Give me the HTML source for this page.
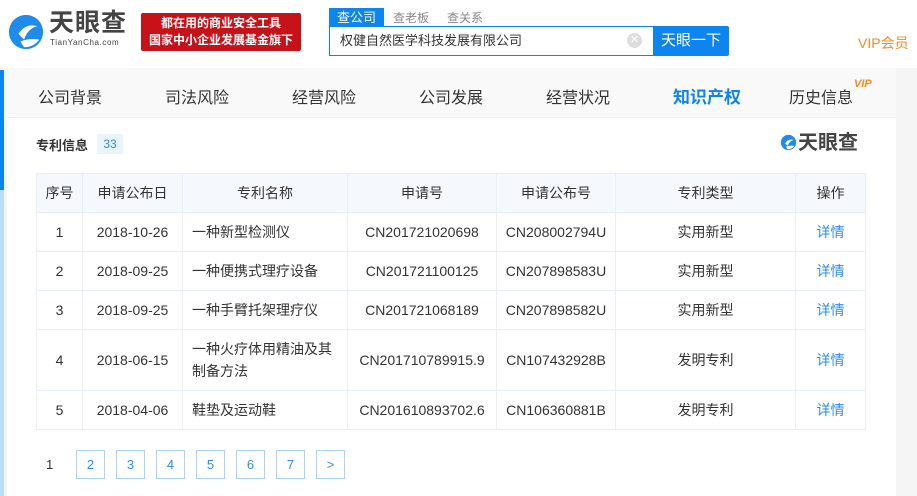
<!DOCTYPE html>
<html><head><meta charset="utf-8"><style>
*{margin:0;padding:0;box-sizing:border-box}
body{width:917px;height:496px;overflow:hidden;background:#fff;font-family:"Liberation Sans","Noto Sans CJK SC",sans-serif;color:#333;position:relative}
.a{position:absolute}
table{border-collapse:collapse;position:absolute;left:36px;top:173px;font-size:14px}
td,th{border:1px solid #e8eff8;text-align:center;font-weight:normal;padding:0}
th{background:#f5f9fd;height:39px}
td{height:39px}
td.l{text-align:left;padding-left:9px}
a{color:#2c8cf0;text-decoration:none}
.pg{position:absolute;top:450px;width:29px;height:29px;border:1px solid #a9d3fb;color:#2c8cf0;font-size:13px;text-align:center;line-height:27px}
</style></head><body>
<svg class="a" style="left:7px;top:13px" width="38" height="38" viewBox="0 0 40 40"><circle cx="20" cy="20" r="18" fill="#1f8bea"/><path d="M12 22 Q20 10 32 14 Q22 16 18 28Z" fill="#fff"/><path d="M14 30 Q24 26 34 28 Q28 36 18 36Z" fill="#fff"/></svg>
<div class="a" style="left:49px;top:8px;font-size:25px;font-weight:bold;color:#444;letter-spacing:1px;line-height:30px">天眼查</div>
<div class="a" style="left:50px;top:38px;font-size:8px;color:#444;letter-spacing:.6px">TianYanCha.com</div>
<div class="a" style="left:141px;top:13px;width:160px;height:38px;background:#c8121a;border-radius:2px;color:#fff;font-size:12px;font-weight:bold;text-align:center;line-height:17px;padding-top:2px">都在用的商业安全工具<br>国家中小企业发展基金旗下</div>
<div class="a" style="left:329px;top:8px;width:55px;height:19px;background:#0e84ef;color:#fff;font-size:13px;text-align:center;line-height:19px">查公司</div>
<div class="a" style="left:393px;top:9px;font-size:12px;color:#888">查老板</div>
<div class="a" style="left:447px;top:9px;font-size:12px;color:#888">查关系</div>
<div class="a" style="left:329px;top:26px;width:325px;height:30px;border:1px solid #0e84ef;font-size:13px;line-height:28px;padding-left:10px;color:#333">权健自然医学科技发展有限公司</div>
<div class="a" style="left:627px;top:33px;width:15px;height:15px;border-radius:50%;background:#ddd;color:#fff;font-size:11px;text-align:center;line-height:15px">✕</div>
<div class="a" style="left:653px;top:26px;width:76px;height:30px;background:#0e84ef;color:#fff;font-size:15px;text-align:center;line-height:30px;border-radius:0 2px 2px 0">天眼一下</div>
<div class="a" style="left:858px;top:33px;font-size:14px;color:#fb8a1c">VIP会员</div>
<div class="a" style="left:0;top:68px;width:917px;height:428px;background:#f5f5f5"></div>
<div class="a" style="left:0;top:70px;width:4px;height:120px;background:#0e84ef"></div>
<div class="a" style="left:0;top:190px;width:4px;height:306px;background:#bcdcfb"></div>
<div class="a" style="left:7px;top:68px;width:889px;height:428px;background:#fff"></div>
<div class="a" style="left:7px;top:68px;width:889px;height:50px;background:#f9f9f9;border-bottom:1px solid #eee"></div>
<div class="a" style="top:84px;font-size:16px;color:#333;left:38px">公司背景</div>
<div class="a" style="top:84px;font-size:16px;color:#333;left:165px">司法风险</div>
<div class="a" style="top:84px;font-size:16px;color:#333;left:292px">经营风险</div>
<div class="a" style="top:84px;font-size:16px;color:#333;left:419px">公司发展</div>
<div class="a" style="top:84px;font-size:16px;color:#333;left:546px">经营状况</div>
<div class="a" style="top:83px;font-size:17px;color:#0e84ef;font-weight:bold;left:673px">知识产权</div>
<div class="a" style="top:84px;font-size:16px;color:#333;left:789px">历史信息</div>
<div class="a" style="top:78px;font-size:11px;color:#fb8a1c;font-weight:bold;font-style:italic;left:854px">VIP</div>
<div class="a" style="left:36px;top:135px;font-size:13px;font-weight:bold;color:#333">专利信息</div>
<div class="a" style="left:97px;top:134px;width:26px;height:20px;background:#eaf4fe;color:#2c8cf0;font-size:12px;text-align:center;line-height:20px">33</div>
<svg class="a" style="left:780px;top:134px" width="17" height="17" viewBox="0 0 40 40"><circle cx="20" cy="20" r="18" fill="#1f8bea"/><path d="M12 22 Q20 10 32 14 Q22 16 18 28Z" fill="#fff"/><path d="M14 30 Q24 26 34 28 Q28 36 18 36Z" fill="#fff"/></svg>
<div class="a" style="left:798px;top:131px;font-size:20px;font-weight:bold;color:#444;line-height:24px">天眼查</div>
<table>
<tr><th style="width:46px">序号</th><th style="width:100px">申请公布日</th><th style="width:165px">专利名称</th><th style="width:149px">申请号</th><th style="width:119px">申请公布号</th><th style="width:180px">专利类型</th><th style="width:70px">操作</th></tr>
<tr><td>1</td><td>2018-10-26</td><td class="l">一种新型检测仪</td><td>CN201721020698</td><td>CN208002794U</td><td>实用新型</td><td><a>详情</a></td></tr>
<tr><td>2</td><td>2018-09-25</td><td class="l">一种便携式理疗设备</td><td>CN201721100125</td><td>CN207898583U</td><td>实用新型</td><td><a>详情</a></td></tr>
<tr><td>3</td><td>2018-09-25</td><td class="l">一种手臂托架理疗仪</td><td>CN201721068189</td><td>CN207898582U</td><td>实用新型</td><td><a>详情</a></td></tr>
<tr><td style="height:61px">4</td><td>2018-06-15</td><td class="l" style="line-height:22px">一种火疗体用精油及其<br>制备方法</td><td>CN201710789915.9</td><td>CN107432928B</td><td>发明专利</td><td><a>详情</a></td></tr>
<tr><td>5</td><td>2018-04-06</td><td class="l">鞋垫及运动鞋</td><td>CN201610893702.6</td><td>CN106360881B</td><td>发明专利</td><td><a>详情</a></td></tr>
</table>
<div class="a" style="left:46px;top:457px;font-size:13px">1</div>
<div class="pg" style="left:76px">2</div><div class="pg" style="left:116px">3</div><div class="pg" style="left:156px">4</div><div class="pg" style="left:196px">5</div><div class="pg" style="left:236px">6</div><div class="pg" style="left:276px">7</div><div class="pg" style="left:316px">&gt;</div>
</body></html>
